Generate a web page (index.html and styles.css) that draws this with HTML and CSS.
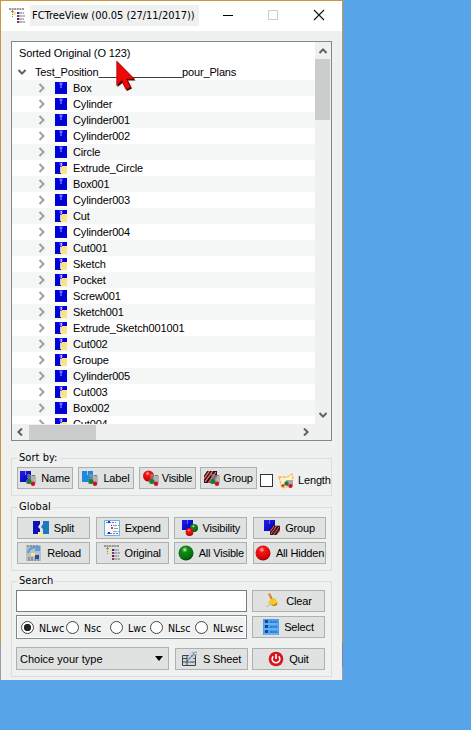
FILE: index.html
```html
<!DOCTYPE html>
<html lang="en">
<head>
<meta charset="utf-8">
<title>FCTreeView</title>
<link rel="stylesheet" href="styles.css">
</head>
<body>
<svg class="defs" aria-hidden="true">
  <defs>
    <linearGradient id="gBlue" x1="0" y1="0" x2="1" y2="1"><stop offset="0" stop-color="#2020f0"/><stop offset="1" stop-color="#0000b0"/></linearGradient>
    <radialGradient id="gRed" cx=".42" cy=".28" r=".75"><stop offset="0" stop-color="#ffc0b8"/><stop offset=".25" stop-color="#f01818"/><stop offset=".7" stop-color="#d80808"/><stop offset="1" stop-color="#900000"/></radialGradient>
    <radialGradient id="gGreen" cx=".42" cy=".28" r=".75"><stop offset="0" stop-color="#c0ffb0"/><stop offset=".25" stop-color="#148a18"/><stop offset=".7" stop-color="#0a7010"/><stop offset="1" stop-color="#004a00"/></radialGradient>
    <symbol id="box" viewBox="0 0 12 12"><path fill="#0000d8" d="M0 0h12v12H0z"/><path fill="#1010a0" d="M0 11h12v1H0z"/><path fill="#2c2cf8" d="M4 0h4v3H4z"/><path fill="#a8a8ff" d="M5.500 1h1v5h-1z"/></symbol>
    <symbol id="boxy" viewBox="0 0 12 12"><use href="#box"/><path fill="#c8c8e8" d="M5 5h1v6H5z"/><path fill="#c8c8ff" d="M6 1h1v3H6z"/><path fill="#ffe08a" d="M6 5h1V4h5v8H6z"/></symbol>
    <symbol id="dots" viewBox="0 0 16 16"><path fill="#999" d="M7 4h3v1h4l2 1v6l-1 2H6v-4l2-1z" opacity=".65"/><path fill="#777" d="M12 5h3v1h-3zM7 7h3v1H7z"/><circle cx="9" cy="11.500" r="2.500" fill="#168030"/><circle cx="13" cy="13.700" r="2.200" fill="#d01028"/></symbol>
    <symbol id="name" viewBox="0 0 16 16"><path fill="url(#gBlue)" d="M0 1h11v11H0z"/><path fill="#8080ff" d="M5 1h1v4H5z"/><use href="#dots"/></symbol>
    <symbol id="label" viewBox="0 0 16 16"><path fill="#1e88e0" d="M0 1h11v11H0z"/><path fill="#8ccaff" d="M5 1h1v4H5z"/><use href="#dots"/></symbol>
    <symbol id="visible" viewBox="0 0 16 16"><circle cx="5.500" cy="6" r="5.500" fill="url(#gRed)"/><use href="#dots"/></symbol>
    <symbol id="hatch" viewBox="0 0 12 12"><path fill="#201010" d="M3 1h9v6l-4 5H0V5z"/><path stroke="#f08080" stroke-width="1.100" fill="none" d="M0 8l5-7M1 11l7-10M4 12l7-10M8 12l4-6"/><path stroke="#a01020" stroke-width=".6" fill="none" d="M0 10L7 1M3 12l7-10M6 12l6-8"/></symbol>
    <symbol id="group" viewBox="0 0 16 16"><use href="#hatch" width="13" height="13"/><use href="#dots"/></symbol>
    <symbol id="length" viewBox="0 0 16 16"><path fill="#fff0d0" stroke="#f4b848" stroke-width="1.300" stroke-dasharray="3 1" d="M1 4l8 0 5-3 1 4-2 8-9 2z"/><path fill="#aaa" d="M8 7h7v6H8z"/><circle cx="8.500" cy="10.500" r="2.200" fill="#207838"/><circle cx="5" cy="12.500" r="1.600" fill="#e03838"/><circle cx="12.500" cy="13" r="2.100" fill="#d01028"/></symbol>
    <symbol id="split" viewBox="0 0 16 16"><path fill="#1010b8" d="M0 1h7v3l-2 3 2 2v5H0z"/><path fill="#1e78c0" d="M16 1h-6v3L8 7l2 2v5h6z"/><path fill="#ffe89a" d="M5 12h4v4H5z"/></symbol>
    <symbol id="expend" viewBox="0 0 16 16"><path fill="#f8fcff" stroke="#70b0e0" stroke-width="1" d="M.5.5h15v15H.5z"/><path stroke="#7078d8" stroke-dasharray="2 1" d="M2 2.500h10M3 13.500h11"/><path stroke="#90a4b0" stroke-dasharray="4 1" d="M9 5.500h6M10 8.500h5M9 11.500h6"/><path fill="#e04040" d="M7 7h2v2H7z"/><path fill="#2038e0" d="M4 1h2v2H4zM4 12h2v2H4zM7 5h1v1H7z"/></symbol>
    <symbol id="vis2" viewBox="0 0 16 16"><path fill="url(#gBlue)" d="M0 0h11v10H0z"/><path fill="#6060ff" d="M5 0h1v4H5z"/><circle cx="12" cy="8" r="4" fill="url(#gGreen)"/><circle cx="7.500" cy="12" r="3.900" fill="url(#gRed)"/></symbol>
    <symbol id="group2" viewBox="0 0 16 16"><path fill="url(#gBlue)" d="M0 0h11v11H0z"/><path fill="#6060ff" d="M5 0h1v4H5z"/><use href="#hatch" x="6" y="4" width="10" height="12"/></symbol>
    <symbol id="tree" viewBox="0 0 16 16"><path stroke="#807870" stroke-width="1.400" stroke-dasharray="2 .6" d="M0 1h15"/><path stroke="#999" d="M2 3.500h3"/><path stroke="#888" stroke-dasharray="1 1" d="M3.500 2v7"/><path stroke="#999" stroke-width="1.600" stroke-dasharray="3 .5" d="M10 5h5M10 8h6M10 11h5M10 14h6"/><path fill="#2030b0" d="M8 4h2v2H8zM8 10h2v2H8z"/><path fill="#b03030" d="M8 7h2v2H8zM8 13h2v2H8z"/><path fill="#ffe28a" d="M4 4h3v3H4z"/></symbol>
    <symbol id="reload" viewBox="0 0 16 16"><path fill="#b8c0c4" d="M0 0h15v16H0z"/><path fill="none" stroke="#5aa0d8" stroke-width="2.200" d="M2 8c1-6 8-7 11-4M13 1v4H9"/><path stroke="#667" stroke-dasharray="2 1" d="M1 1h12M2 13h5M2 15h12"/><path fill="#ffe28a" d="M5 8h4v3H5z"/><path fill="#2050b0" d="M9 10h4v4H9z"/></symbol>
    <symbol id="green" viewBox="0 0 16 16"><circle cx="8" cy="8" r="7.500" fill="url(#gGreen)"/></symbol>
    <symbol id="red" viewBox="0 0 16 16"><circle cx="8" cy="8" r="7.500" fill="url(#gRed)"/></symbol>
    <symbol id="broom" viewBox="0 0 16 16"><path fill="#d8862a" d="M3 1l2-1 3 6-2 1z"/><path fill="#f6c820" d="M5 7l5-2 3 5-5 3-5-3z"/><path fill="#a86818" d="M4 11l5 1 3-2v2l-3 1z"/><path stroke="#c8c8c8" stroke-width="1.800" d="M1 14l5-3"/></symbol>
    <symbol id="select" viewBox="0 0 16 16"><path fill="#46a0f4" d="M0 0h16v16H0z"/><path fill="#1c4a80" d="M2 1h3v3H2zM2 6h3v3H2zM2 11h3v3H2z"/><path stroke="#245c98" stroke-dasharray="2 .5" d="M7 3h7M7 8h7M7 13h7"/><path stroke="#9cf" stroke-width=".8" d="M1 5h14M1 10h14M1 15h14"/></symbol>
    <symbol id="sheet" viewBox="0 0 16 16"><path fill="#d4d8d6" stroke="#404448" d="M.5 4.500h13v10H.5zM.5 7.500h13M.5 11h13M5 4v11"/><path fill="#c8d8e8" d="M8 1l6-1-2 7-5 4-2-2z"/><path stroke="#3868a8" stroke-width="1.400" stroke-dasharray="2 1" d="M5 10l7-7"/><path stroke="#999" d="M10 2l5-1M12 4l3-1"/></symbol>
    <symbol id="quit" viewBox="0 0 16 16"><circle cx="8" cy="8" r="7.300" fill="#d8131c"/><path stroke="#fff" stroke-width="1.700" fill="none" d="M5.300 5.300a3.800 3.800 0 1 0 5.400 0M8 3v5"/></symbol>
    <symbol id="chev" viewBox="0 0 8 10"><path fill="none" stroke="#a0a0a0" stroke-width="2" d="M1.500 1l4 4-4 4"/></symbol>
    <symbol id="arrow" viewBox="0 0 8 8"><path fill="none" stroke="#606060" stroke-width="2" d="M.5 6L4 2.400l3.500 3.600"/></symbol>
  </defs>
</svg>
<main class="window">
  <header class="titlebar">
    <svg class="i16"><use href="#tree"/></svg>
    <h1 class="title">FCTreeView (00.05 (27/11/2017))</h1>
    <svg class="winbtns" viewBox="0 0 100 12"><path stroke="#000" d="M0 5.500h10"/><path fill="none" stroke="#ccc" d="M45.500 .5h9v9h-9z"/><path stroke="#111" stroke-width="1.100" d="M91 0l10 10M101 0L91 10"/></svg>
  </header>
  <section class="tree">
    <div class="view">
      <div class="head">Sorted Original (O 123)</div>
      <div class="root"><svg class="down"><use href="#arrow"/></svg>Test_Position______________pour_Plans</div>
      <div id="rows"></div>
    </div>
    <div class="vbar"><svg class="up"><use href="#arrow"/></svg><div class="vthumb"></div><svg class="down"><use href="#arrow"/></svg></div>
    <div class="hbar"><svg class="left"><use href="#arrow"/></svg><div class="hthumb"></div><svg class="right"><use href="#arrow"/></svg></div>
    <svg class="cursor" viewBox="0 0 20 32"><path fill="#400" d="M1.500 2v25l5-4 4.500 8 5-2.500L12 20.500h7.500z"/><path fill="#f00808" stroke="#800" stroke-width=".6" d="M.7 1v24.500l5-5L10 29.500l4.500-2.200L10.500 19h8z"/></svg>
  </section>
  <fieldset class="box sort">
    <legend>Sort by:</legend>
    <button><svg class="i16"><use href="#name"/></svg><span>Name</span></button>
    <button><svg class="i16"><use href="#label"/></svg><span>Label</span></button>
    <button class="tight"><svg class="i16"><use href="#visible"/></svg><span>Visible</span></button>
    <button class="tight"><svg class="i16"><use href="#group"/></svg><span>Group</span></button>
    <label class="check"><i></i><svg class="i16"><use href="#length"/></svg><span>Length</span></label>
  </fieldset>
  <fieldset class="box global">
    <legend>Global</legend>
    <button><svg class="i16"><use href="#split"/></svg><span>Split</span></button>
    <button><svg class="i16"><use href="#expend"/></svg><span>Expend</span></button>
    <button><svg class="i16"><use href="#vis2"/></svg><span>Visibility</span></button>
    <button><svg class="i16"><use href="#group2"/></svg><span>Group</span></button>
    <button><svg class="i16"><use href="#reload"/></svg><span>Reload</span></button>
    <button><svg class="i16"><use href="#tree"/></svg><span>Original</span></button>
    <button><svg class="i16"><use href="#green"/></svg><span>All Visible</span></button>
    <button><svg class="i16"><use href="#red"/></svg><span>All Hidden</span></button>
  </fieldset>
  <fieldset class="box search">
    <legend>Search</legend>
    <div class="line"><div class="field"></div><button><svg class="i16"><use href="#broom"/></svg><span>Clear</span></button></div>
    <div class="line second">
      <div class="radios"><label class="on"><i></i>NLwc</label><label><i></i>Nsc</label><label><i></i>Lwc</label><label><i></i>NLsc</label><label><i></i>NLwsc</label></div>
      <button><svg class="i16"><use href="#select"/></svg><span>Select</span></button>
    </div>
    <div class="line third">
      <div class="combo">Choice your type<b></b></div>
      <button class="sheet"><svg class="i16"><use href="#sheet"/></svg><span>S Sheet</span></button>
      <button class="quit"><svg class="i16"><use href="#quit"/></svg><span>Quit</span></button>
    </div>
  </fieldset>
</main>
<script src="tree.js"></script>
</body>
</html>
```
FILE: tree.js
```js
// A leading "*" marks a feature whose children are hidden (yellow corner).
const items = ["Box", "Cylinder", "Cylinder001", "Cylinder002", "Circle", "*Extrude_Circle", "Box001",
  "Cylinder003", "*Cut", "Cylinder004", "*Cut001", "*Sketch", "*Pocket", "Screw001", "*Sketch001",
  "*Extrude_Sketch001001", "*Cut002", "*Groupe", "Cylinder005", "*Cut003", "Box002", "*Cut004"];
document.getElementById("rows").innerHTML = items.map(t => {
  const y = t[0] === "*";
  return `<div class="row"><svg class="chev"><use href="#chev"/></svg><svg class="i12"><use href="#${y ? "boxy" : "box"}"/></svg>${y ? t.slice(1) : t}</div>`;
}).join("");
```
FILE: styles.css
```css
* { box-sizing: border-box; }
body { margin: 0; width: 471px; height: 730px; overflow: hidden; background: #58a4e8; font: 11px/16px "Liberation Sans", Arial, sans-serif; color: #000; letter-spacing: -.15px; }
.defs { position: absolute; width: 0; height: 0; }
svg { display: block; flex: none; }
.window { width: 343px; height: 680px; background: linear-gradient(#c8983a 642px, #9c9ca4 642px) left / 1px 100% no-repeat, linear-gradient(#c8983a 642px, #8c7c98 642px 666px, #9c9ca4 666px) right / 1px 100% no-repeat, #eff1f0; border-top: 1px solid #c8983a; padding: 0 11px; }
.titlebar { height: 30px; margin: 0 -10px 10px; padding: 0 8px; background: #fff; display: flex; align-items: center; }
.title { margin: -2px 0 0 5px; width: 169px; height: 21px; padding-left: 2px; background: #eff1f0; font: 11px/21px "DejaVu Sans Condensed", "DejaVu Sans", sans-serif; font-stretch: condensed; letter-spacing: -.03px; white-space: nowrap; }
.winbtns { width: 100px; height: 12px; margin-left: 24px; overflow: visible; }
.i16 { width: 16px; height: 16px; }
.i12 { width: 12px; height: 12px; margin-right: 6px; }
.tree { position: relative; width: 321px; height: 400px; border: 1px solid #828790; background: #fff; display: grid; grid-template: 382px 16px / 303px 16px; }
.view { overflow: hidden; white-space: nowrap; }
.head { height: 22px; line-height: 23px; padding-left: 7px; letter-spacing: -.1px; }
.root { height: 16px; display: flex; align-items: center; padding-left: 6px; }
.root .down { margin-right: 9px; }
.row { height: 16px; display: flex; align-items: center; padding-left: 26px; }
.row:nth-child(odd) { background: #f5f6f6; }
.chev { width: 8px; height: 10px; margin-right: 9px; }
.up, .down, .left, .right { width: 8px; height: 8px; }
.down { transform: rotate(180deg); }
.left { transform: rotate(-90deg); }
.right { transform: rotate(90deg); }
.vbar { background: #eff0f0; display: flex; flex-direction: column; align-items: center; padding: 5px 1px 5px 0; }
.vthumb { width: 15px; height: 61px; margin: 4px 0 auto; background: #cbcccc; }
.hbar { grid-column: 1 / 3; background: #eff0f0; display: flex; align-items: center; padding: 0 21px 0 4px; }
.hthumb { width: 67px; height: 15px; margin: 0 auto 0 5px; background: #cbcccc; }
.cursor { position: absolute; left: 104px; top: 18px; width: 20px; height: 32px; }
.box { position: relative; width: 321px; margin: 0; padding: 0; border: 1px solid #dcdedd; min-width: 0; }
legend { padding: 0 2px; height: 16px; font: 11px/16px "DejaVu Sans Condensed", "DejaVu Sans", sans-serif; font-stretch: condensed; letter-spacing: .05px; }
button { height: 22px; margin: 0; padding: 0; border: 1px solid #adb0ae; background: #dfe2e0; font: inherit; letter-spacing: inherit; color: inherit; display: flex; align-items: center; justify-content: center; gap: 5px; white-space: nowrap; }
.sort { margin-top: 9px; height: 46px; display: flex; gap: 5px; padding: 1px 0 0 5px; }
.sort button { width: 56px; }
.sort .tight { gap: 3px; width: 57px; letter-spacing: -.25px; }
.sort .tight + .tight { margin-left: -1px; }
.check { display: flex; align-items: center; gap: 4px; height: 26px; margin-left: -2px; white-space: nowrap; }
.check i { width: 13px; height: 13px; border: 1px solid #333; background: #fff; margin-right: 1px; }
.check .i16 { margin-top: 2px; }
.global { margin-top: 3px; height: 72px; display: grid; grid-template-columns: repeat(4, 73px); gap: 3px 5.700px; align-content: start; padding: 2px 0 0 5px; }
.global button { letter-spacing: -.2px; }
.search { margin-top: 2px; height: 104px; padding: 1px 0 0 4px; }
.search legend { margin-left: 1px; }
.line { display: flex; gap: 5px; }
.line button { width: 73px; }
.field, .radios { width: 231px; background: #fff; border: 1px solid #7a7d80; }
.field { height: 22px; }
.second { margin-top: 3px; align-items: center; }
.radios { height: 24px; background: #eff1f0; border-color: #828790; box-shadow: inset 0 0 0 1px #fff; display: grid; grid-template-columns: 45px 44px 40px 45px 50px; align-items: center; padding: 1px 0 0 4px; font: 10.500px/16px "DejaVu Sans Condensed", "DejaVu Sans", sans-serif; font-stretch: condensed; letter-spacing: 0; white-space: nowrap; }
.radios label { display: flex; align-items: center; }
.radios i { flex: none; width: 13px; height: 13px; border: 1px solid #444; border-radius: 50%; background: #fff; margin-right: 5px; }
.radios .on i { background: radial-gradient(circle, #222 3.400px, #fff 4px); }
.third { margin-top: 8px; align-items: center; }
.combo { width: 153px; height: 23px; border: 1px solid #adb0ae; background: #dfe2e0; padding: 0 5px 0 3px; display: flex; align-items: center; justify-content: space-between; letter-spacing: 0; }
.combo b { border: 4px solid transparent; border-top: 5px solid #000; border-bottom: 0; }
.third .sheet { margin-left: 1px; margin-top: 1px; }
.third .quit { margin-left: -1px; }
```
